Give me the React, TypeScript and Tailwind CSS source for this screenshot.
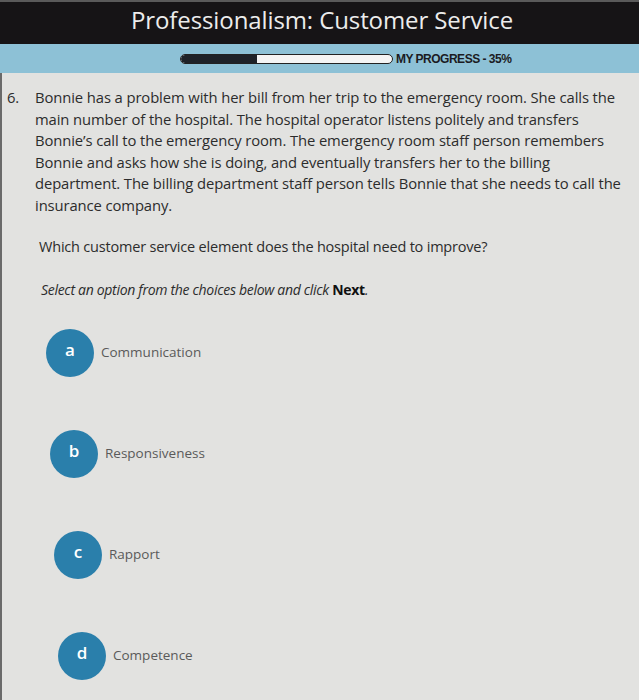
import React from 'react'

const options = [
  { key: 'a', label: 'Communication', shift: 'ml-[44px]' },
  { key: 'b', label: 'Responsiveness', shift: 'ml-[48px]' },
  { key: 'c', label: 'Rapport', shift: 'ml-[52px]' },
  { key: 'd', label: 'Competence', shift: 'ml-[56px]' },
]

export default function App() {
  return (
    <div className="flex h-[700px] w-[639px] flex-col overflow-hidden bg-[#e2e2e0] font-['Open_Sans',sans-serif]">
      <header className="flex h-[44px] justify-center border-t-2 border-[#5a5a5a] bg-[#161416] pl-[5px] pt-[2px]">
        <h1 className="text-[24px] leading-[32px] tracking-[-0.1px] text-[#ececec]">Professionalism: Customer Service</h1>
      </header>

      <div className="flex h-[29px] items-center bg-[#8dc1d6] pl-[180px]">
        <div className="flex h-[10px] w-[213px] overflow-hidden rounded-full border border-[#222] bg-[#f4f4f4]">
          <div className="h-full w-[76px] rounded-l-full bg-[#1e2228]" />
        </div>
        <span className="ml-[3px] font-['Liberation_Sans_Narrow','Liberation_Sans',sans-serif] text-[12px] font-bold tracking-[-0.5px] text-[#1b1b22]">
          MY PROGRESS - 35%
        </span>
      </div>

      <main className="flex flex-1 flex-col border-l-2 border-[#6a6a6a] pt-[14px] text-[#2c2c2c]">
        <div className="flex pl-[5px] pr-[14px] text-[14.8px] leading-[21.5px] tracking-[-0.1px]">
          <span className="w-[28px] shrink-0">6.</span>
          <p className="max-w-[586px]">
            Bonnie has a problem with her bill from her trip to the emergency room. She calls the main number of the
            hospital. The hospital operator listens politely and transfers Bonnie’s call to the emergency room. The
            emergency room staff person remembers Bonnie and asks how she is doing, and eventually transfers her to the
            billing department. The billing department staff person tells Bonnie that she needs to call the insurance
            company.
          </p>
        </div>

        <p className="mt-[20px] pl-[37px] text-[14.5px] leading-[21px] tracking-[-0.2px]">
          Which customer service element does the hospital need to improve?
        </p>

        <p className="mt-[22px] pl-[39px] text-[14px] italic leading-[21px] tracking-[-0.3px]">
          Select an option from the choices below and click <span className="font-bold not-italic text-[#111]">Next</span>.
        </p>

        <div className="mt-[29px] flex flex-col gap-[53px]">
          {options.map((o) => (
            <div key={o.key} className={`flex items-center ${o.shift}`}>
              <div className="flex h-[48px] w-[48px] items-center justify-center rounded-full bg-[#2a7fab] pb-[6px] text-[17px] font-semibold text-white">
                {o.key}
              </div>
              <span className="ml-[7px] pb-[2px] text-[13.5px] text-[#5a5a5a]">{o.label}</span>
            </div>
          ))}
        </div>
      </main>
    </div>
  )
}
